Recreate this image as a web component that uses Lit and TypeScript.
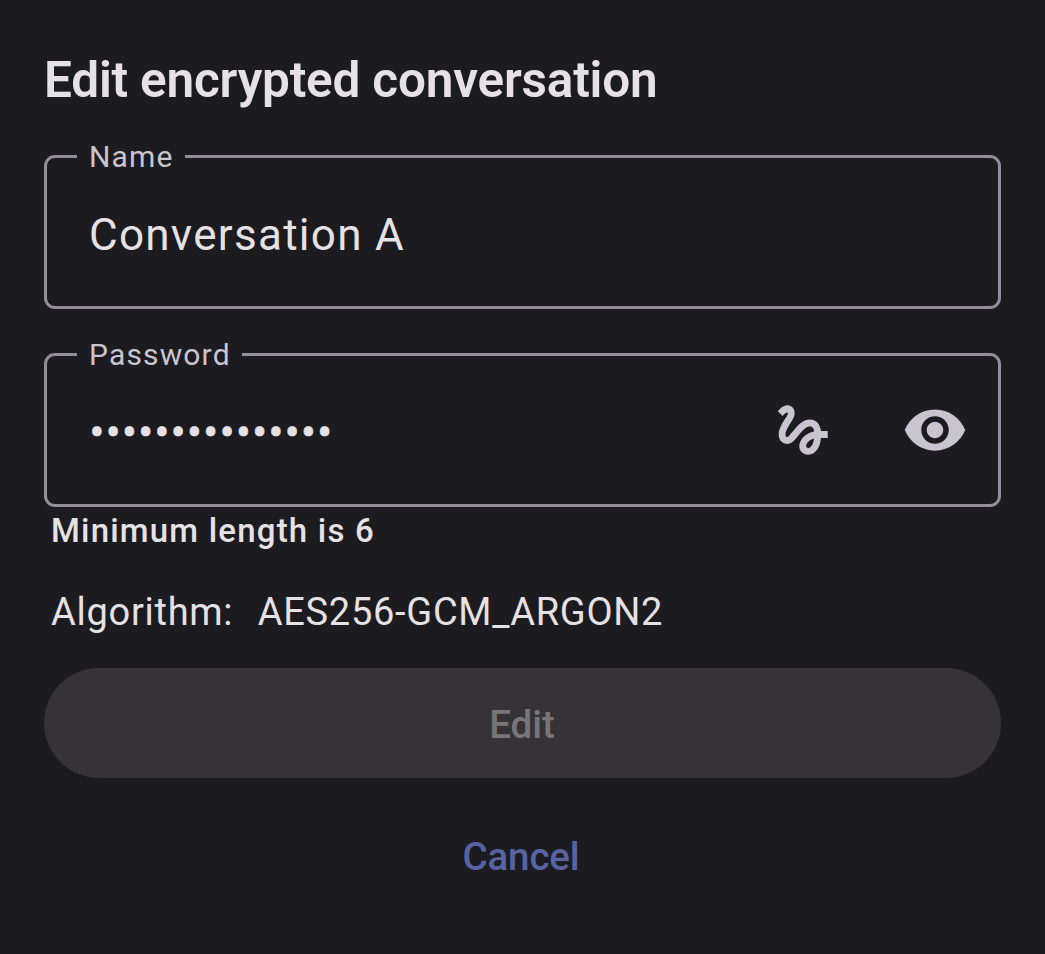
import { LitElement, html, css } from "lit";
import { customElement, property } from "lit/decorators.js";

@customElement("outlined-field")
class OutlinedField extends LitElement {
  @property() label = "";

  static styles = css`
    :host { display: block; height: 165px; }
    .box {
      box-sizing: border-box;
      height: 165px;
      min-width: 0;
      margin: 0;
      padding: 0 30px 0 42px;
      border: 3px solid #938f99;
      border-radius: 11px;
    }
    .label {
      height: 25px;
      margin-left: -12px;
      padding: 0 11.7px 0 12px;
      color: #cac4d0;
      font-size: 30px;
      line-height: 26px;
      letter-spacing: 1.15px;
    }
    .content {
      display: flex;
      align-items: center;
      justify-content: space-between;
      height: 126px;
    }
  `;

  render() {
    return html`
      <fieldset class="box">
        <legend class="label">${this.label}</legend>
        <div class="content"><slot></slot></div>
      </fieldset>
    `;
  }
}

@customElement("app-root")
class AppRoot extends LitElement {
  static styles = css`
    :host {
      display: block;
      box-sizing: border-box;
      height: 954px;
      padding: 50px 44px 0;
      background: #1c1b1f;
      color: #e6e1e5;
      font-family: Roboto, sans-serif;
    }
    .title {
      margin: 0 0 34px;
      font-size: 49.5px;
      line-height: 60px;
      font-weight: 600;
      letter-spacing: -0.2px;
      white-space: nowrap;
    }
    .field { margin-bottom: 33px; }
    .field.last { margin-bottom: 0; }
    .value { padding-top: 6px; font-size: 44px; line-height: 52px; letter-spacing: 1.28px; }
    .value.masked { padding-left: 0.5px; letter-spacing: 1.42px; -webkit-text-stroke: 0.6px currentColor; }
    .icons { display: flex; gap: 66px; color: #cac4d0; }
    .icon { display: block; width: 66px; height: 66px; fill: currentColor; }
    .hint {
      margin: 4px 0 0 7px;
      font-size: 33px;
      line-height: 40px;
      font-weight: 500;
      letter-spacing: 1.2px;
    }
    .algorithm {
      display: flex;
      gap: 24.5px;
      margin: 38px 0 0 7px;
      font-size: 38px;
      line-height: 46px;
      letter-spacing: 0.72px;
    }
    .button {
      display: block;
      box-sizing: border-box;
      width: 100%;
      height: 110px;
      padding: 4px 1px 0 0;
      border: 0;
      border-radius: 55px;
      font: 500 38.5px/46px Roboto, sans-serif;
    }
    .edit { margin-top: 33px; background: #353337; color: #787579; }
    .cancel { margin-top: 22px; padding-right: 3px; background: none; color: #5664a4; letter-spacing: -0.15px; }
  `;

  render() {
    return html`
      <h1 class="title">Edit encrypted conversation</h1>
      <outlined-field class="field" label="Name">
        <span class="value">Conversation A</span>
      </outlined-field>
      <outlined-field class="field last" label="Password">
        <span class="value masked">${"•".repeat(15)}</span>
        <span class="icons">
          <svg class="icon" viewBox="0 0 24 24"><path d="M4.59 6.89c.7-.71 1.4-1.35 1.71-1.22.5.2 0 1.03-.3 1.52-.25.42-2.86 3.89-2.86 6.31 0 1.28.48 2.34 1.34 2.98.75.56 1.74.73 2.64.46 1.07-.31 1.95-1.4 3.06-2.77 1.21-1.49 2.83-3.44 4.08-3.44 1.63 0 1.65 1.01 1.76 1.79-3.78.64-5.38 3.67-5.38 5.37 0 1.7 1.44 3.09 3.21 3.09 1.63 0 4.29-1.33 4.69-6.1H21v-2.5h-2.47c-.15-1.65-1.09-4.2-4.03-4.2-2.25 0-4.18 1.91-4.94 2.84-.58.73-2.06 2.48-2.29 2.72-.25.3-.68.84-1.11.84-.45 0-.72-.83-.36-1.92.35-1.09 1.4-2.86 1.85-3.52.78-1.14 1.3-1.92 1.3-3.28C8.95 3.69 7.31 3 6.44 3 5.12 3 3.97 4 3.72 4.25c-.36.36-.66.66-.88.93l1.75 1.71zm9.29 11.66c-.31 0-.74-.26-.74-.72 0-.6.73-2.2 2.87-2.76-.3 2.69-1.43 3.48-2.13 3.48z"/></svg>
          <svg class="icon" viewBox="0 0 24 24"><path d="M12 4.5C7 4.5 2.73 7.61 1 12c1.73 4.39 6 7.5 11 7.5s9.27-3.11 11-7.5c-1.73-4.39-6-7.5-11-7.5zM12 17c-2.76 0-5-2.24-5-5s2.24-5 5-5 5 2.24 5 5-2.24 5-5 5zm0-8c-1.66 0-3 1.34-3 3s1.34 3 3 3 3-1.34 3-3-1.34-3-3-3z"/></svg>
        </span>
      </outlined-field>
      <div class="hint">Minimum length is 6</div>
      <div class="algorithm"><span>Algorithm:</span><span>AES256-GCM_ARGON2</span></div>
      <button class="button edit" disabled>Edit</button>
      <button class="button cancel">Cancel</button>
    `;
  }
}
